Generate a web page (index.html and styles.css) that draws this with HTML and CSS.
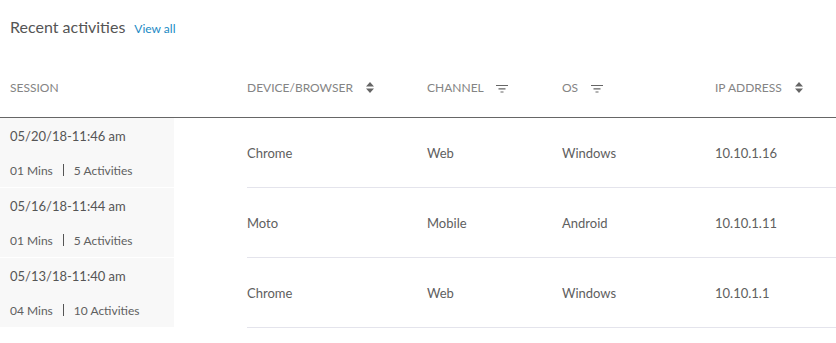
FILE: index.html
```html
<!DOCTYPE html>
<html lang="en">
<head>
    <meta charset="UTF-8">
    <title>Recent activities</title>
    <link rel="stylesheet" href="styles.css">
</head>
<body>
    <div class="title-bar">
        <h2>Recent activities</h2>
        <a href="#" class="view-all">View all</a>
    </div>

    <table class="activity-table">
        <thead>
            <tr>
                <th class="col-session">Session</th>
                <th class="col-device">Device/Browser
                    <svg class="icon" width="8" height="11" viewBox="0 0 8 11"><path d="M4 0L8 4.5H0Z M4 11L0 6.5H8Z" fill="#666"/></svg>
                </th>
                <th class="col-channel">Channel
                    <svg class="icon" width="12" height="8" viewBox="0 0 12 8"><path d="M0 0.5H12 M2.5 3.8H9.5 M4.5 7H7.5" stroke="#666" stroke-width="1.2"/></svg>
                </th>
                <th class="col-os">OS
                    <svg class="icon" width="12" height="8" viewBox="0 0 12 8"><path d="M0 0.5H12 M2.5 3.8H9.5 M4.5 7H7.5" stroke="#666" stroke-width="1.2"/></svg>
                </th>
                <th class="col-ip">IP Address
                    <svg class="icon" width="8" height="11" viewBox="0 0 8 11"><path d="M4 0L8 4.5H0Z M4 11L0 6.5H8Z" fill="#666"/></svg>
                </th>
            </tr>
        </thead>
        <tbody>
            <tr>
                <td class="session">
                    <div class="session-date">05/20/18-11:46 am</div>
                    <div class="session-meta"><span>01 Mins</span><span class="sep"></span><span>5 Activities</span></div>
                </td>
                <td>Chrome</td>
                <td>Web</td>
                <td>Windows</td>
                <td>10.10.1.16</td>
            </tr>
            <tr>
                <td class="session">
                    <div class="session-date">05/16/18-11:44 am</div>
                    <div class="session-meta"><span>01 Mins</span><span class="sep"></span><span>5 Activities</span></div>
                </td>
                <td>Moto</td>
                <td>Mobile</td>
                <td>Android</td>
                <td>10.10.1.11</td>
            </tr>
            <tr>
                <td class="session">
                    <div class="session-date">05/13/18-11:40 am</div>
                    <div class="session-meta"><span>04 Mins</span><span class="sep"></span><span>10 Activities</span></div>
                </td>
                <td>Chrome</td>
                <td>Web</td>
                <td>Windows</td>
                <td>10.10.1.1</td>
            </tr>
        </tbody>
    </table>
</body>
</html>
```

FILE: styles.css
```css
body {
    font-family: Lato, "Liberation Sans", sans-serif;
    margin: 0;
    padding: 0;
    background-color: #fff;
    color: #555;
}
.title-bar {
    display: flex;
    align-items: baseline;
    gap: 9px;
    padding: 17px 10px 0;
    height: 42px;
}
.title-bar h2 {
    margin: 0;
    font-size: 16px;
    font-weight: normal;
    color: #555;
}
.view-all {
    font-size: 12px;
    color: #1a8ac4;
    text-decoration: none;
}
.activity-table {
    width: 836px;
    border-collapse: collapse;
    table-layout: fixed;
}
.activity-table th {
    height: 56px;
    padding: 0 0 2px;
    font-size: 12px;
    font-weight: normal;
    text-transform: uppercase;
    color: #848484;
    text-align: left;
    border-bottom: 1px solid #666;
    white-space: nowrap;
}
.activity-table th .icon {
    margin-left: 10px;
    vertical-align: -1px;
}
.col-session {
    width: 237px;
    padding-left: 10px !important;
}
.col-device {
    width: 180px;
}
.col-channel {
    width: 135px;
}
.col-os {
    width: 153px;
}
.activity-table td {
    height: 69px;
    padding: 0;
    font-size: 13px;
    color: #606060;
    border-bottom: 1px solid #e4e4ec;
}
.activity-table td.session {
    padding: 0;
    border-bottom: 1px solid #fff;
    vertical-align: top;
}
.session-date,
.session-meta {
    width: 164px;
    padding-left: 10px;
    background-color: #f8f8f8;
}
.session-date {
    padding-top: 10px;
    height: 25px;
    font-size: 13px;
    color: #555;
}
.session-meta {
    height: 34px;
    font-size: 12px;
    color: #606060;
    display: flex;
    align-items: center;
}
.sep {
    width: 1px;
    height: 12px;
    background-color: #555;
    margin: 0 10px;
}
```
